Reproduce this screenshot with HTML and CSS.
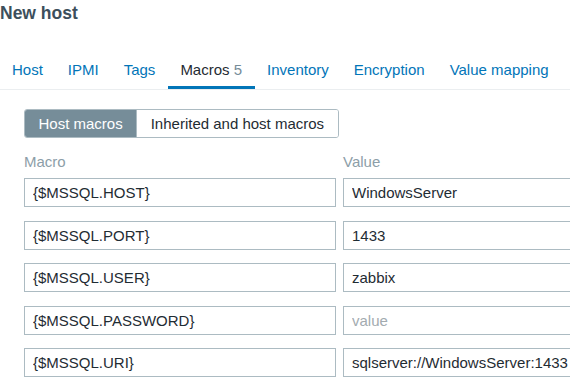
FILE: index.html
```html
<!DOCTYPE html>
<html lang="en">
<head>
    <meta charset="UTF-8">
    <meta name="viewport" content="width=device-width, initial-scale=1.0">
    <title>New host</title>
    <link rel="stylesheet" href="styles.css">
</head>
<body>
    <h1 class="page-title">New host</h1>

    <nav class="tabs">
        <a class="tab" href="#">Host</a>
        <a class="tab" href="#">IPMI</a>
        <a class="tab" href="#">Tags</a>
        <a class="tab active" href="#">Macros <span class="count">5</span></a>
        <a class="tab" href="#">Inventory</a>
        <a class="tab" href="#">Encryption</a>
        <a class="tab" href="#">Value mapping</a>
    </nav>

    <div class="tab-body">
        <div class="segmented">
            <button class="seg active" type="button">Host macros</button>
            <button class="seg" type="button">Inherited and host macros</button>
        </div>

        <div class="macros">
            <div class="macro-head">
                <span class="col-macro">Macro</span>
                <span class="col-value">Value</span>
            </div>
            <div class="macro-row">
                <input class="field col-macro" type="text" value="{$MSSQL.HOST}">
                <input class="field col-value" type="text" value="WindowsServer">
            </div>
            <div class="macro-row">
                <input class="field col-macro" type="text" value="{$MSSQL.PORT}">
                <input class="field col-value" type="text" value="1433">
            </div>
            <div class="macro-row">
                <input class="field col-macro" type="text" value="{$MSSQL.USER}">
                <input class="field col-value" type="text" value="zabbix">
            </div>
            <div class="macro-row">
                <input class="field col-macro" type="text" value="{$MSSQL.PASSWORD}">
                <input class="field col-value" type="text" placeholder="value">
            </div>
            <div class="macro-row">
                <input class="field col-macro" type="text" value="{$MSSQL.URI}">
                <input class="field col-value" type="text" value="sqlserver://WindowsServer:1433">
            </div>
        </div>
    </div>
</body>
</html>
```

FILE: styles.css
```css
html, body {
    overflow: hidden;
}
body {
    font-family: 'Liberation Sans', Arial, sans-serif;
    font-size: 15px;
    color: #1f2c33;
    background: #fff;
    margin: 0;
    padding: 0;
}
.page-title {
    margin: 0;
    padding: 2px 0 0;
    font-size: 17.5px;
    line-height: 22px;
    font-weight: bold;
    color: #3d4f5c;
}
.tabs {
    display: flex;
    margin-top: 25px;
    border-bottom: 1px solid #ebeef0;
}
.tab {
    display: block;
    padding: 12px 12.5px 7px;
    line-height: 18px;
    color: #0275b8;
    text-decoration: none;
    border-bottom: 3px solid transparent;
}
.tab:first-child {
    padding-left: 12px;
}
.tab.active {
    color: #1f2c33;
    border-bottom-color: #0275b8;
}
.tab .count {
    color: #768d99;
}
.tab-body {
    padding: 19px 0 0 24px;
    overflow: hidden;
}
.segmented {
    display: inline-flex;
    height: 29px;
    border: 1px solid #acbbc2;
    border-radius: 3px;
    overflow: hidden;
    box-sizing: border-box;
}
.seg {
    font: inherit;
    line-height: 27px;
    padding: 0 13.5px;
    margin: 0;
    border: 0;
    background: #fff;
    color: #1f2c33;
}
.seg.active {
    background: #768d99;
    color: #fff;
}
.seg + .seg {
    border-left: 1px solid #acbbc2;
}
.macros {
    margin-top: 15px;
    display: flex;
    flex-direction: column;
    gap: 13.6px;
}
.macro-head,
.macro-row {
    display: flex;
    gap: 7px;
}
.macro-head {
    line-height: 18px;
    color: #8c9ea8;
    margin-bottom: -6.6px;
}
.col-macro {
    width: 312px;
    flex: none;
}
.col-value {
    width: 300px;
    flex: none;
}
.field {
    box-sizing: border-box;
    height: 29px;
    margin: 0;
    padding: 0 8px;
    border: 1px solid #acbbc2;
    border-radius: 0;
    font: inherit;
    color: #1f2c33;
    background: #fff;
    outline: none;
}
.field::placeholder {
    color: #a3abb0;
}
```
